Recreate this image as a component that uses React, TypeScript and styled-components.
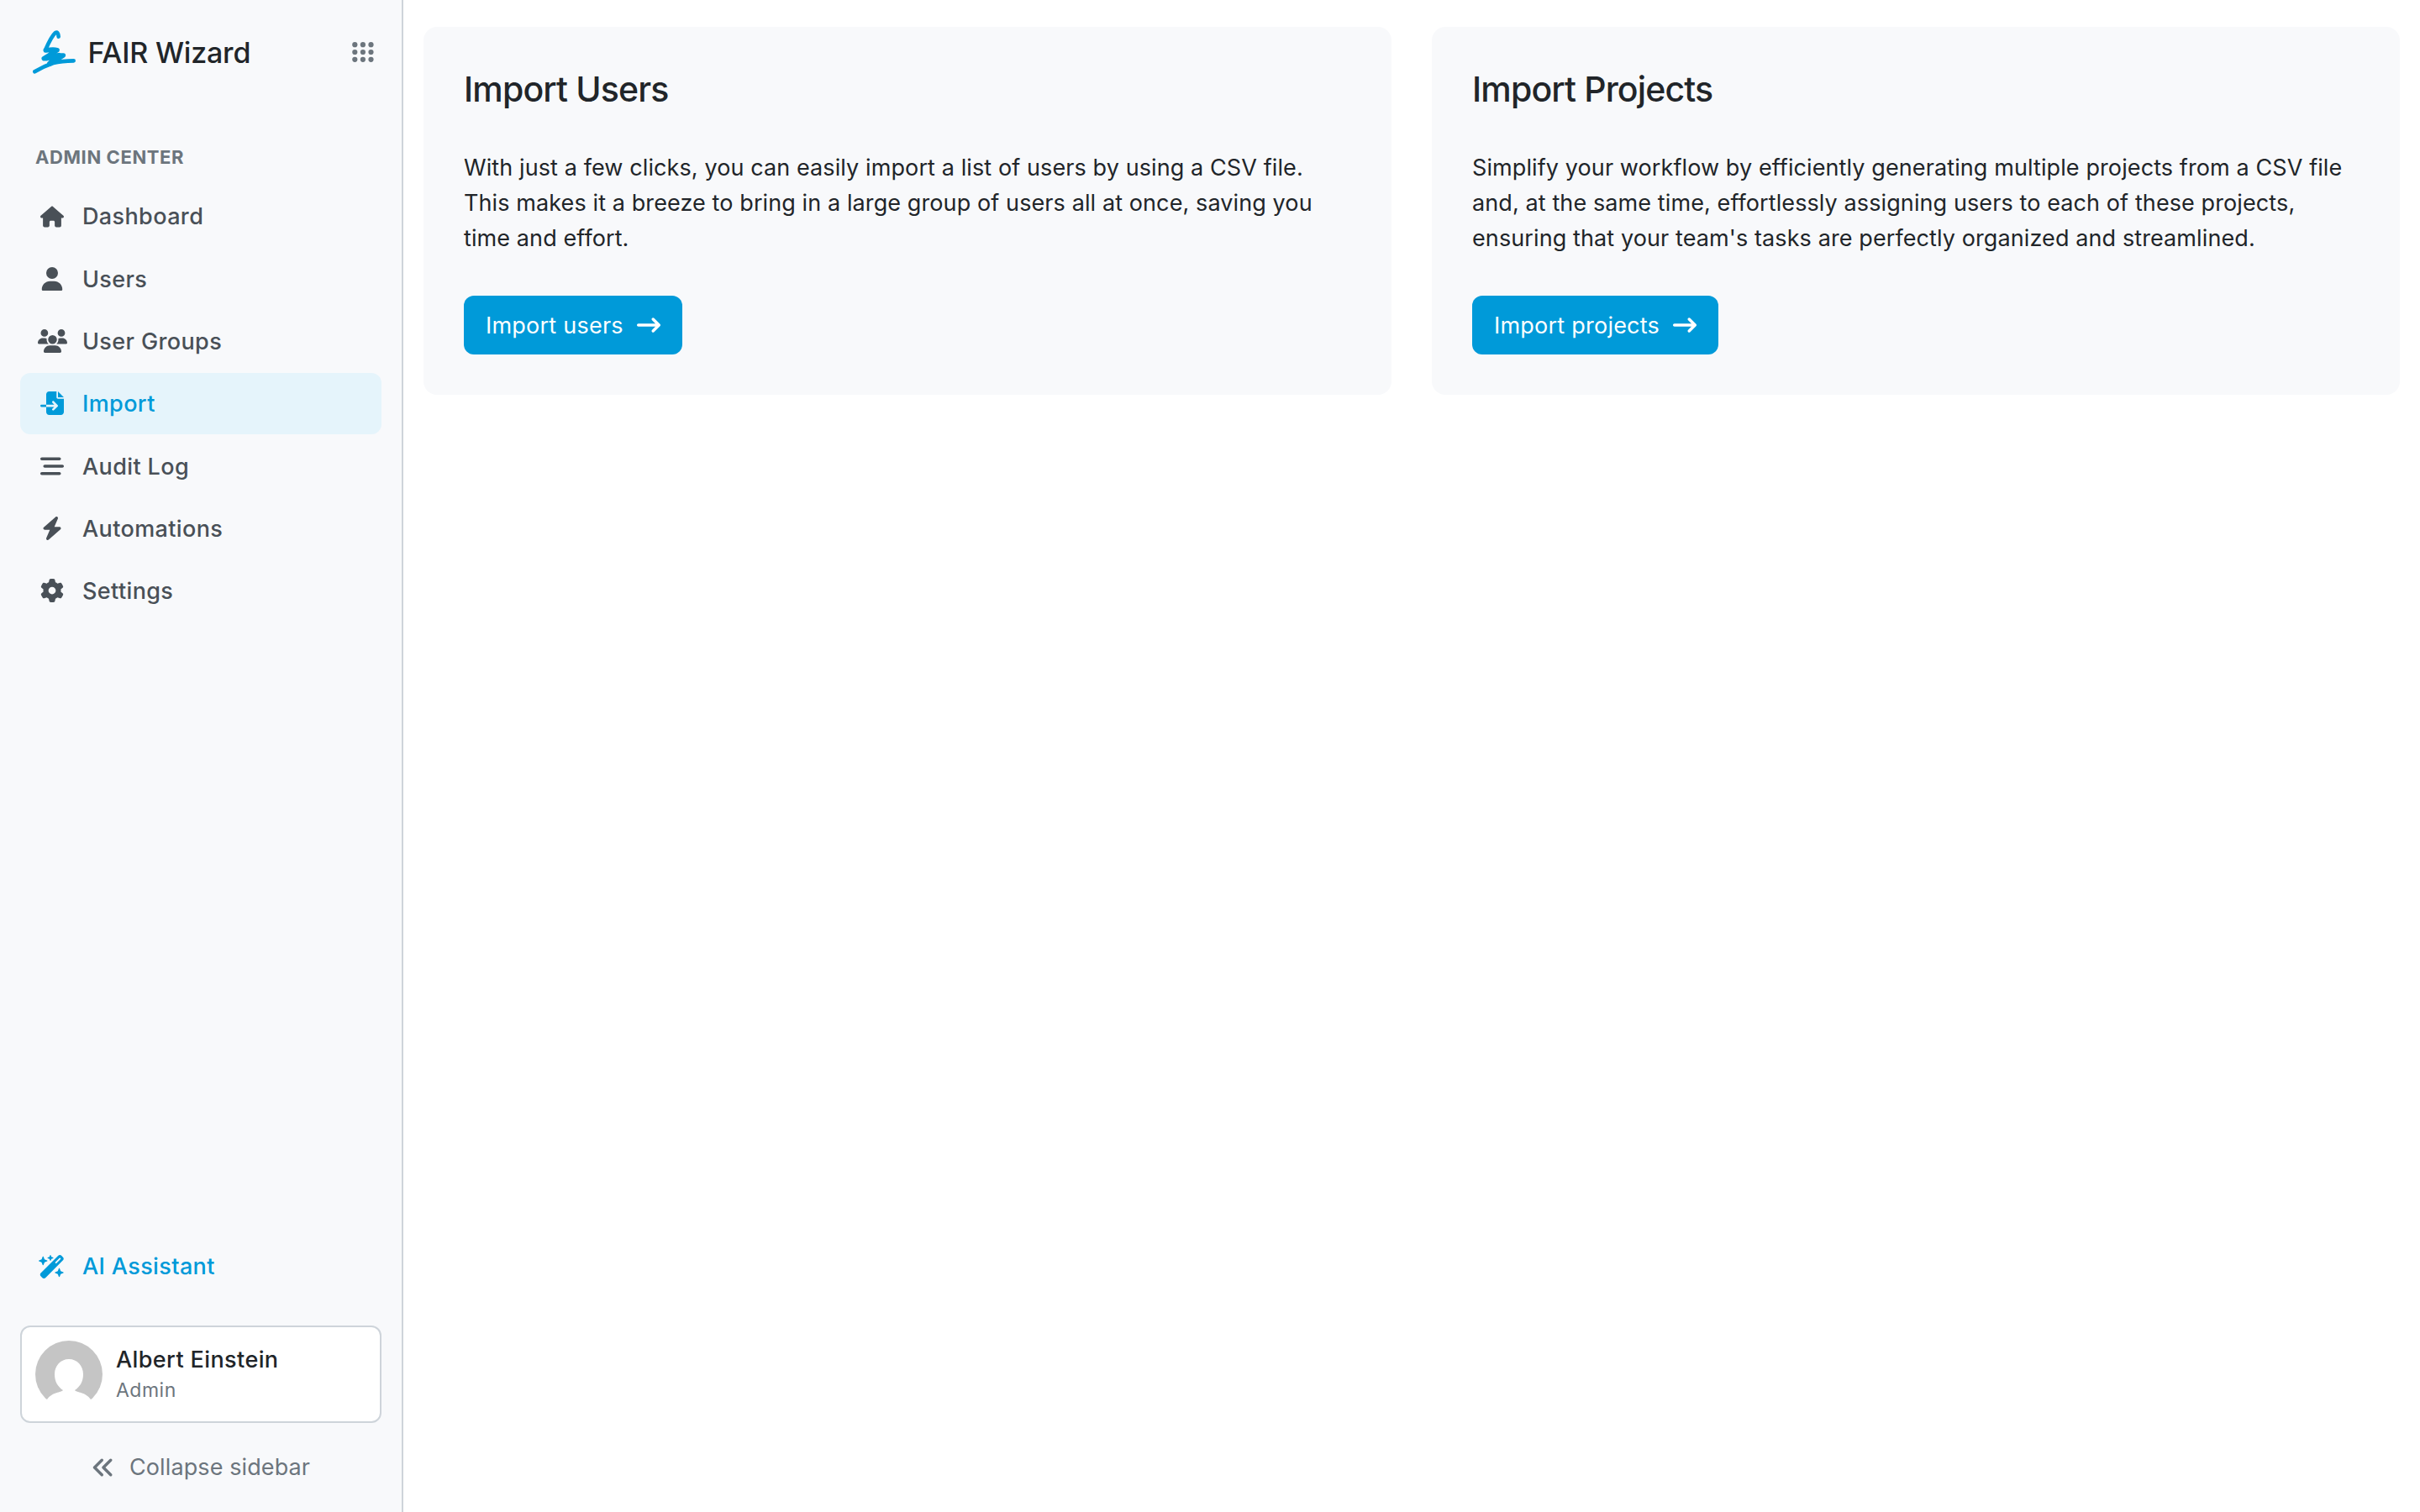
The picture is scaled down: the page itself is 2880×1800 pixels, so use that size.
import React from 'react';
import styled, { createGlobalStyle, css } from 'styled-components';
import {
  FaAnglesLeft,
  FaArrowRightLong,
  FaBarsStaggered,
  FaBolt,
  FaFileImport,
  FaGear,
  FaHouse,
  FaUser,
  FaUsers,
  FaWandMagicSparkles,
} from 'react-icons/fa6';

const colors = {
  primary: '#009ad9',
  primaryLight: '#e5f4fb',
  surface: '#f8f9fb',
  border: '#ced4da',
  text: '#212529',
  textLight: '#6c757d',
  textNav: '#495057',
};

const GlobalStyle = createGlobalStyle`
  * {
    box-sizing: border-box;
  }

  body {
    margin: 0;
    background: #fff;
    color: ${colors.text};
    font-family: Inter, 'Liberation Sans', sans-serif;
    font-size: 27px;
    line-height: 42px;
    letter-spacing: 0.1px;
  }
`;

const Layout = styled.div`
  display: flex;
  height: 100vh;
`;

const Sidebar = styled.aside`
  display: flex;
  flex-direction: column;
  flex: none;
  width: 480px;
  padding: 0 24px 0;
  background: ${colors.surface};
  border-right: 2px solid ${colors.border};
`;

const Header = styled.header`
  display: flex;
  align-items: center;
  height: 124px;
  padding: 0 9px 0 15px;
`;

const AppTitle = styled.span`
  flex: 1;
  margin-left: 13.5px;
  padding-top: 2px;
  font-size: 34px;
  font-weight: 500;
  letter-spacing: -0.2px;
`;

const SectionTitle = styled.h2`
  margin: 42px 0 13px 18px;
  color: ${colors.textLight};
  font-size: 22px;
  font-weight: 700;
  letter-spacing: 0.6px;
  text-transform: uppercase;
`;

const Nav = styled.nav`
  display: flex;
  flex-direction: column;
  gap: 1.33px;
`;

const NavLink = styled.a<{ $active?: boolean; $highlighted?: boolean }>`
  display: flex;
  align-items: center;
  height: 73px;
  padding-left: 20px;
  border-radius: 12px;
  color: ${colors.textNav};
  font-weight: 500;
  letter-spacing: 0.38px;

  ${props =>
    (props.$active || props.$highlighted) &&
    css`
      color: ${colors.primary};
    `}

  ${props =>
    props.$active &&
    css`
      background: ${colors.primaryLight};
    `}
`;

const NavIcon = styled.span`
  display: flex;
  justify-content: center;
  width: 36px;
  margin-right: 18px;
  font-size: 28px;
`;

const NavLabel = styled.span`
  padding-top: 1.5px;
`;

// react-icons draws in a square, the wide glyphs need their own width
const UsersIcon = styled(FaUsers)`
  flex: none;
  width: 35px;
`;

const WandIcon = styled(FaWandMagicSparkles)`
  flex: none;
  width: 31.5px;
`;

const Bottom = styled.div`
  margin-top: auto;
`;

const UserBox = styled.div`
  display: flex;
  align-items: center;
  height: 116px;
  margin-top: 34px;
  padding: 0 16px;
  background: #fff;
  border: 2px solid ${colors.border};
  border-radius: 12px;
`;

const AvatarImage = styled.svg`
  flex: none;
  width: 80px;
  height: 80px;
  margin-right: 16px;
`;

const UserName = styled.div`
  font-weight: 500;
  line-height: 38px;
  letter-spacing: 0.4px;
`;

const UserRole = styled.div`
  color: ${colors.textLight};
  font-size: 23px;
  line-height: 35px;
  letter-spacing: 0.5px;
`;

const CollapseLink = styled.a`
  display: flex;
  align-items: center;
  height: 106px;
  padding-left: 85px;
  color: ${colors.textLight};

  svg {
    width: 28px;
    height: 28px;
    margin-right: 17px;
  }
`;

const Content = styled.main`
  display: grid;
  grid-template-columns: 1fr 1fr;
  gap: 48px;
  align-items: start;
  flex: 1;
  padding: 32px 24px;
`;

const Card = styled.section`
  height: 438px;
  padding: 48px;
  background: ${colors.surface};
  border-radius: 16px;
`;

const CardTitle = styled.h3`
  margin: 0 0 47px;
  font-size: 41px;
  font-weight: 500;
  line-height: 52px;
  letter-spacing: -0.85px;
`;

const CardText = styled.p`
  margin: 0 0 47px;
  white-space: nowrap;
`;

const Button = styled.button`
  display: inline-flex;
  align-items: center;
  gap: 16px;
  height: 70px;
  padding: 0 26px;
  border: 0;
  border-radius: 12px;
  background: ${colors.primary};
  color: #fff;
  font: inherit;
  letter-spacing: 0.23px;

  svg {
    width: 28px;
    height: 28px;
  }
`;

const ButtonLabel = styled.span`
  padding-top: 1px;
`;

const Logo = () => (
  <svg width="52" height="52" viewBox="27 47 156 156" fill="none" stroke={colors.primary} strokeLinecap="round" strokeLinejoin="round">
    <path strokeWidth="14" d="M119 70 Q118 50 107 57 Q94 68 73 116" />
    <path strokeWidth="17" d="M73 119 Q100 114 114 118 L96 130 L67 148 Q105 136 136 137 L104 158" />
    <path strokeWidth="19" d="M74 147 L120 137 L88 166" />
    <path strokeWidth="14" d="M34 195 Q65 176 100 164 Q130 156 173 156" />
  </svg>
);

const DOTS = [0, 1, 2];

const AppsIcon = () => (
  <svg width="26" height="24" viewBox="0 0 26 24" fill={colors.textLight}>
    {DOTS.map(row => DOTS.map(col => <circle key={`${row}-${col}`} cx={3.3 + col * 9.6} cy={3.2 + row * 8.8} r="3.1" />))}
  </svg>
);

const Avatar = () => (
  <AvatarImage viewBox="0 0 80 80">
    <circle cx="40" cy="40" r="40" fill="#c5c5c5" />
    <path
      fill="#fff"
      d="M40 22 C30 22 23 30 23 40 C23 49 27 55 33 59 C31 62 20 61 14 70 L14 80 H66 L66 70 C60 61 49 62 47 59 C53 55 57 49 57 40 C57 30 50 22 40 22Z"
    />
  </AvatarImage>
);

type NavItem = {
  label: string;
  icon: React.ReactNode;
  active?: boolean;
};

const NAV_ITEMS: NavItem[] = [
  { label: 'Dashboard', icon: <FaHouse /> },
  { label: 'Users', icon: <FaUser /> },
  { label: 'User Groups', icon: <UsersIcon /> },
  { label: 'Import', icon: <FaFileImport />, active: true },
  { label: 'Audit Log', icon: <FaBarsStaggered /> },
  { label: 'Automations', icon: <FaBolt /> },
  { label: 'Settings', icon: <FaGear /> },
];

type ImportCardProps = {
  title: string;
  action: string;
  lines: string[];
};

const ImportCard: React.FC<ImportCardProps> = ({ title, action, lines }) => (
  <Card>
    <CardTitle>{title}</CardTitle>
    <CardText>
      {lines.map(line => (
        <React.Fragment key={line}>
          {line}
          <br />
        </React.Fragment>
      ))}
    </CardText>
    <Button>
      <ButtonLabel>{action}</ButtonLabel>
      <FaArrowRightLong />
    </Button>
  </Card>
);

const App: React.FC = () => (
  <Layout>
    <GlobalStyle />
    <Sidebar>
      <Header>
        <Logo />
        <AppTitle>FAIR Wizard</AppTitle>
        <AppsIcon />
      </Header>
      <SectionTitle>Admin Center</SectionTitle>
      <Nav>
        {NAV_ITEMS.map(({ label, icon, active }) => (
          <NavLink key={label} $active={active}>
            <NavIcon>{icon}</NavIcon>
            <NavLabel>{label}</NavLabel>
          </NavLink>
        ))}
      </Nav>
      <Bottom>
        <NavLink $highlighted>
          <NavIcon>
            <WandIcon />
          </NavIcon>
          AI Assistant
        </NavLink>
        <UserBox>
          <Avatar />
          <div>
            <UserName>Albert Einstein</UserName>
            <UserRole>Admin</UserRole>
          </div>
        </UserBox>
        <CollapseLink>
          <FaAnglesLeft />
          Collapse sidebar
        </CollapseLink>
      </Bottom>
    </Sidebar>
    <Content>
      <ImportCard
        title="Import Users"
        action="Import users"
        lines={[
          'With just a few clicks, you can easily import a list of users by using a CSV file.',
          'This makes it a breeze to bring in a large group of users all at once, saving you',
          'time and effort.',
        ]}
      />
      <ImportCard
        title="Import Projects"
        action="Import projects"
        lines={[
          'Simplify your workflow by efficiently generating multiple projects from a CSV file',
          'and, at the same time, effortlessly assigning users to each of these projects,',
          "ensuring that your team's tasks are perfectly organized and streamlined.",
        ]}
      />
    </Content>
  </Layout>
);

export default App;
